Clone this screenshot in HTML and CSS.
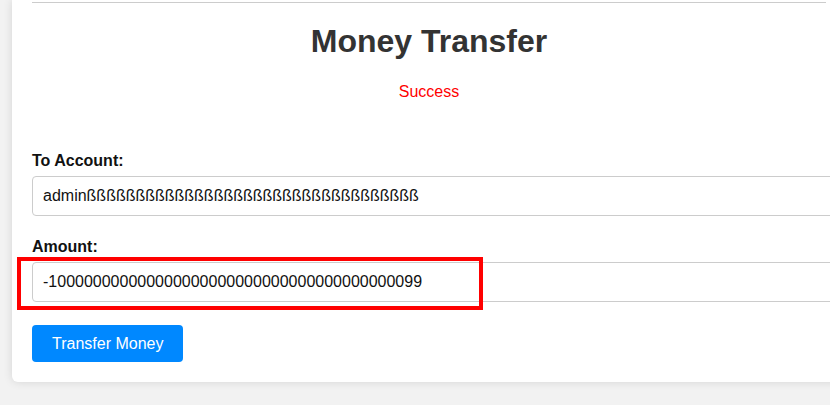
FILE: index.html
```html
<!DOCTYPE html>
<html lang="en">
<head>
<meta charset="utf-8">
<title>Money Transfer</title>
<link rel="stylesheet" href="styles.css">
</head>
<body>
<div class="card">
  <div class="divider"></div>
  <h1 class="title">Money Transfer</h1>
  <p class="status">Success</p>
  <form class="form">
    <div class="group">
      <label class="label" for="to">To Account:</label>
      <input class="field" id="to" type="text" value="adminßßßßßßßßßßßßßßßßßßßßßßßßßßßßßßßßßß">
    </div>
    <div class="group group-last">
      <label class="label" for="amount">Amount:</label>
      <div class="field-wrap">
        <input class="field" id="amount" type="text" value="-100000000000000000000000000000000000000099">
        <div class="highlight"></div>
      </div>
    </div>
    <button class="btn" type="button">Transfer Money</button>
  </form>
</div>
</body>
</html>
```

FILE: styles.css
```css
html, body {
  margin: 0;
  padding: 0;
  overflow: hidden;
}
body {
  background: #f2f2f2;
  font-family: "Liberation Sans", Arial, sans-serif;
  width: 830px;
  height: 405px;
}
.card {
  margin-left: 12px;
  width: 794px;
  padding: 2px 20px 20px;
  background: #fff;
  border-radius: 0 0 6px 6px;
  box-shadow: 0 0 10px rgba(0, 0, 0, 0.12);
}
.divider {
  height: 1px;
  background: #cccccc;
}
.title {
  margin: 20px 0 0;
  font-size: 32px;
  line-height: 37px;
  font-weight: bold;
  color: #333;
  text-align: center;
}
.status {
  margin: 23px 0 0;
  font-size: 16px;
  line-height: 18px;
  color: #ff0000;
  text-align: center;
}
.form {
  margin-top: 51px;
}
.group {
  margin-bottom: 22px;
}
.group-last {
  margin-bottom: 23px;
}
.label {
  display: block;
  font-size: 16px;
  line-height: 18px;
  font-weight: bold;
  color: #111;
  margin-bottom: 6px;
}
.field-wrap {
  position: relative;
}
.field {
  display: block;
  width: 100%;
  box-sizing: content-box;
  padding: 10px;
  height: 18px;
  font-family: "Liberation Sans", Arial, sans-serif;
  font-size: 16px;
  line-height: 18px;
  color: #111;
  border: 1px solid #cccccc;
  border-radius: 4px;
  background: #fff;
  outline: none;
}
.highlight {
  position: absolute;
  left: -15px;
  top: -5px;
  width: 458px;
  height: 45px;
  border: 4px solid #ff0000;
  pointer-events: none;
}
.btn {
  display: block;
  padding: 10px 20px;
  height: 37px;
  font-family: "Liberation Sans", Arial, sans-serif;
  font-size: 16px;
  line-height: 17px;
  color: #fff;
  background: #0088ff;
  border: none;
  border-radius: 4px;
}
```
